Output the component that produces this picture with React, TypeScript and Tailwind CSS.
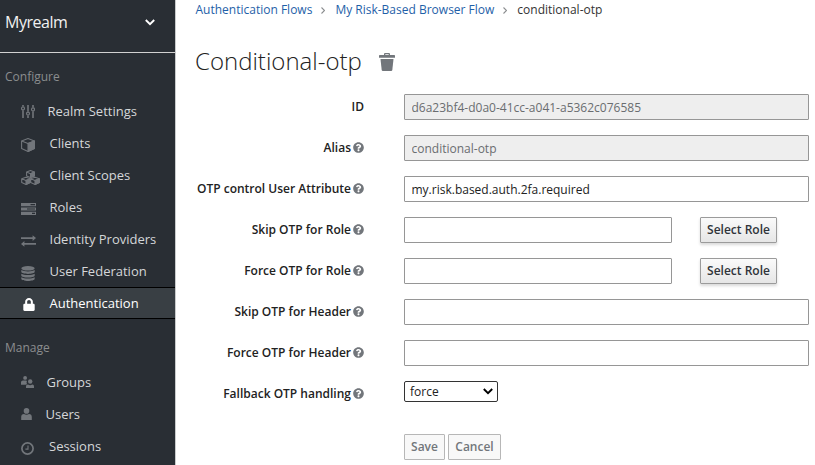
import React from 'react';
import { FaQuestionCircle, FaLock } from 'react-icons/fa';

type IconProps = { className?: string };

const Sliders = () => (
  <svg width="14" height="14" viewBox="0 0 14 14" fill="none" stroke="currentColor" strokeWidth="1.2">
    <path d="M2 0v1.6M2 5.2V13M7 0v6.8M7 10.4V13M12 0v2.6M12 6.2V13" strokeWidth="1.6" />
    <circle cx="2" cy="3.4" r="1.5" />
    <circle cx="7" cy="8.6" r="1.5" />
    <circle cx="12" cy="4.4" r="1.5" />
  </svg>
);

const Cube = () => (
  <svg width="14" height="14" viewBox="0 0 14 14" fill="none" stroke="currentColor" strokeWidth="1.1" strokeLinejoin="round">
    <path d="M7 .6 13.4 3v7.6L7 13.4.6 10.6V3Z" />
    <path d="M.6 3 7 5.5 13.4 3" />
    <path d="M7 5.5 13.4 3v7.6L7 13.4Z" fill="currentColor" />
  </svg>
);

const Cubes = () => (
  <svg width="19" height="15" viewBox="0 0 19 15" fill="none" stroke="currentColor" strokeWidth="1.1" strokeLinejoin="round">
    <path d="M9.5.6 13.4 2.1v3.8L9.5 7.6 5.6 5.9V2.1Z M5.6 2.1 9.5 3.7l3.9-1.6" />
    <path d="M9.5 3.7l3.9-1.6v3.8L9.5 7.6Z" fill="currentColor" />
    <path d="M5 7.2 9.2 8.8v3.7L5 14.4.7 12.5V8.8Z M.7 8.8 5 10.5l4.2-1.7" />
    <path d="M5 10.5l4.2-1.7v3.7L5 14.4Z" fill="currentColor" />
    <path d="M14 7.2l4.3 1.6v3.7L14 14.4l-4.3-1.9V8.8Z M9.7 8.8 14 10.5l4.3-1.7" />
    <path d="M14 10.5l4.3-1.7v3.7L14 14.4Z" fill="currentColor" />
  </svg>
);

const Tasks = () => (
  <svg width="15" height="12" viewBox="0 0 15 12" fill="currentColor" fillRule="evenodd">
    <path d="M0 0h15v3.2H0ZM9.5 1v1.2H14V1ZM0 4.4h15v3.2H0ZM6 5.4v1.2h8V5.4ZM0 8.8h15V12H0ZM11 9.8V11h3V9.8Z" />
  </svg>
);

const Exchange = () => (
  <svg width="15" height="12" viewBox="0 0 15 12" fill="currentColor">
    <path d="M0 2.2h11.6V.2L15 3.1l-3.4 2.9V4H0ZM15 8v1.8H3.4v2L0 8.9 3.4 6v2Z" />
  </svg>
);

const Database = () => (
  <svg width="14" height="15" viewBox="0 0 14 15" fill="currentColor">
    <ellipse cx="7" cy="2.3" rx="6.7" ry="2.3" />
    <path d="M.3 4.1c2.6 1.7 10.8 1.7 13.4 0v1.7c0 2.8-13.4 2.8-13.4 0ZM.3 7.7c2.6 1.7 10.8 1.7 13.4 0v1.7c0 2.8-13.4 2.8-13.4 0ZM.3 11.3c2.6 1.7 10.8 1.7 13.4 0v1.4c0 2.9-13.4 2.9-13.4 0Z" />
  </svg>
);

const Lock = () => <FaLock className="ml-[2px] h-[13px] w-[12px]" />;

const Groups = () => (
  <svg width="13" height="12" viewBox="0 0 13 12" fill="currentColor">
    <circle cx="4.1" cy="1.9" r="1.9" />
    <path d="M0 8.7V6.5c0-1.3.9-2 2-2h2.8c.7 0 1 .2 1.3.6-.8 1-.6 2.3.1 3.1-.9.1-1.5.2-1.8.5Z" />
    <circle cx="9.2" cy="5.5" r="2.2" />
    <path d="M5 12v-1.4c0-1.3.8-2.2 2-2.2 1.3 1 3 1 4.3 0 1.1 0 1.7.9 1.7 2.2V12Z" />
  </svg>
);

const User = () => (
  <svg width="11" height="12" viewBox="0 0 11 12" fill="currentColor">
    <circle cx="5.5" cy="2.9" r="2.8" />
    <path d="M.2 12V9c0-2 1-3 2.8-3 1.5 1.1 3.5 1.1 5 0 1.8 0 2.8 1 2.8 3v3Z" />
  </svg>
);

const Clock = () => (
  <svg width="13" height="13" viewBox="0 0 13 13" fill="none" stroke="currentColor">
    <circle cx="6.5" cy="6.5" r="5.6" strokeWidth="1.7" />
    <path d="M7 3.6v3.5H4.4" strokeWidth="1.1" />
  </svg>
);

const Trash = () => (
  <svg width="16" height="18" viewBox="0 0 16 18" fill="#72767b">
    <path d="M5 2V1.4C5 .5 5.5 0 6.4 0h3.2c.9 0 1.4.5 1.4 1.4V2h4.3c.4 0 .7.3.7.7v2.1H0V2.7c0-.4.3-.7.7-.7Zm1.3 0h3.4v-.8H6.3Z" />
    <path d="M1.5 6h13l-1.2 11c-.1.7-.5 1-1.1 1H3.8c-.6 0-1-.3-1.1-1Z" />
  </svg>
);

const Chevron = ({ className = '' }: IconProps) => (
  <svg className={className} viewBox="0 0 10 7" fill="none" stroke="currentColor" strokeWidth="1.9">
    <path d="m.8 1 4.2 4.2L9.2 1" />
  </svg>
);

const Separator = () => (
  <svg className="ml-[9px] mr-[10px] mt-px" width="4" height="7" viewBox="0 0 4 7" fill="none" stroke="#8b8d8f" strokeWidth="1.1">
    <path d="m.5.5 3 3-3 3" />
  </svg>
);

type NavItem = { label: string; icon: React.ReactNode; slot: string; active?: boolean };

const configure: NavItem[] = [
  { label: 'Realm Settings', icon: <Sliders />, slot: 'w-[26.5px]' },
  { label: 'Clients', icon: <Cube />, slot: 'w-[28.5px] pt-[2px]' },
  { label: 'Client Scopes', icon: <Cubes />, slot: 'w-[28.5px] pt-[2px]' },
  { label: 'Roles', icon: <Tasks />, slot: 'w-[28.5px] pt-[2px]' },
  { label: 'Identity Providers', icon: <Exchange />, slot: 'w-[28.5px] pt-[2px]' },
  { label: 'User Federation', icon: <Database />, slot: 'w-[28.5px] pt-[2px]' },
  { label: 'Authentication', icon: <Lock />, slot: 'w-[28.5px]', active: true },
];

const manage: NavItem[] = [
  { label: 'Groups', icon: <Groups />, slot: 'w-[25.5px] pb-[2px]' },
  { label: 'Users', icon: <User />, slot: 'w-[24.5px] pb-[2px]' },
  { label: 'Sessions', icon: <Clock />, slot: 'w-[28px] pt-[2px]' },
];

const NavList = ({ items, pad = '' }: { items: NavItem[]; pad?: string }) => (
  <ul>
    {items.map((item) => (
      <li
        key={item.label}
        className={`flex h-8 items-center border-y pl-[21px] text-[13px] ${pad} ${
          item.active ? 'border-black bg-[#393f44] text-white' : 'border-transparent text-[#d5d7d9]'
        }`}
      >
        <span className={`${item.slot} shrink-0 ${item.active ? 'text-white' : 'text-[#72767b]'}`}>{item.icon}</span>
        <span className="whitespace-nowrap">{item.label}</span>
      </li>
    ))}
  </ul>
);

const Row = ({ label, help = true, children }: { label: string; help?: boolean; children: React.ReactNode }) => (
  <div className="flex h-[41px] items-start">
    <label className="flex h-[26px] w-[188px] items-center justify-end gap-[3px] whitespace-nowrap text-[12px] font-semibold text-[#222]">
      <span className={help ? '-mr-px' : ''}>{label}</span>
      {help && <FaQuestionCircle className="mb-[2px] h-[11px] w-[11px] text-[#72767b]" />}
    </label>
    <div className="ml-10 flex">{children}</div>
  </div>
);

const Field = ({ value = '', disabled = false, short = false }: { value?: string; disabled?: boolean; short?: boolean }) => (
  <input
    type="text"
    readOnly
    value={value}
    className={`h-[26px] rounded-[1px] border border-[#969696] px-[6.5px] pt-px text-[12px] outline-none ${
      short ? 'w-[268px]' : 'w-[405px]'
    } ${disabled ? 'bg-[#eee] text-[#6a6d70]' : 'bg-white text-[#222]'}`}
  />
);

const SelectRole = () => (
  <button
    type="button"
    className="ml-7 h-[26px] w-[77px] whitespace-nowrap rounded-[1px] border border-[#9b9b9b] bg-linear-to-b from-[#fafafa] to-[#e6e6e6] text-[12px] font-semibold text-[#30343a] shadow-[0_2px_3px_rgba(3,3,3,0.15)]"
  >
    Select Role
  </button>
);

export default function App() {
  return (
    <div className="flex h-[465px] w-[815px] overflow-hidden bg-white font-['Open_Sans',sans-serif]">
      <aside className="w-[176px] shrink-0 border-r border-[#c9cbcc] bg-[#292e34]">
        <div className="flex h-[53px] items-center justify-between border-b border-[#d1d1d1] pb-[8px] pl-[5px] pr-[20px]">
          <span className="text-[16px] tracking-[-0.03em] text-[#f1f1f1]">Myrealm</span>
          <Chevron className="h-[7px] w-[10px] text-white" />
        </div>
        <h2 className="flex h-[42px] items-center pl-[5px] pt-[6px] text-[12px] text-[#8b8d8f]">Configure</h2>
        <NavList items={configure} pad="pt-[2px]" />
        <h2 className="flex h-12 items-center pl-[5px] pt-[10px] text-[12px] text-[#8b8d8f]">Manage</h2>
        <NavList items={manage} />
      </aside>
      <main className="min-w-0 flex-1">
        <nav className="flex h-5 items-center whitespace-nowrap pl-[19.5px] text-[12px] text-[#1f5fa8]">
          <a>Authentication Flows</a>
          <Separator />
          <a>My Risk-Based Browser Flow</a>
          <Separator />
          <span className="text-[#333]">conditional-otp</span>
        </nav>
        <div className="flex h-[74px] items-center pl-[19px] pt-[10px]">
          <h1 className="w-[183.5px] whitespace-nowrap pb-[2px] text-[24px] font-light text-[#222]">Conditional-otp</h1>
          <Trash />
        </div>
        <form>
          <Row label="ID" help={false}>
            <Field value="d6a23bf4-d0a0-41cc-a041-a5362c076585" disabled />
          </Row>
          <Row label="Alias">
            <Field value="conditional-otp" disabled />
          </Row>
          <Row label="OTP control User Attribute">
            <Field value="my.risk.based.auth.2fa.required" />
          </Row>
          <Row label="Skip OTP for Role">
            <Field short />
            <SelectRole />
          </Row>
          <Row label="Force OTP for Role">
            <Field short />
            <SelectRole />
          </Row>
          <Row label="Skip OTP for Header">
            <Field />
          </Row>
          <Row label="Force OTP for Header">
            <Field />
          </Row>
          <Row label="Fallback OTP handling">
            <button
              type="button"
              className="flex h-[21px] w-[94px] items-center justify-between rounded-[2px] border border-[#333] bg-white pl-[5px] pr-1 text-[12px] text-[#222]"
            >
              force
              <Chevron className="h-[7px] w-[10px] text-black" />
            </button>
          </Row>
          <div className="ml-[228px] mt-3 flex gap-[3px] text-[12px] font-semibold text-[#72767b]">
            <button type="button" className="h-[26px] w-[41px] rounded-[1px] border border-[#b7b7b7] bg-[#f8f8f8]">Save</button>
            <button type="button" className="h-[26px] w-[53px] rounded-[1px] border border-[#b7b7b7] bg-[#f8f8f8]">Cancel</button>
          </div>
        </form>
      </main>
    </div>
  );
}
